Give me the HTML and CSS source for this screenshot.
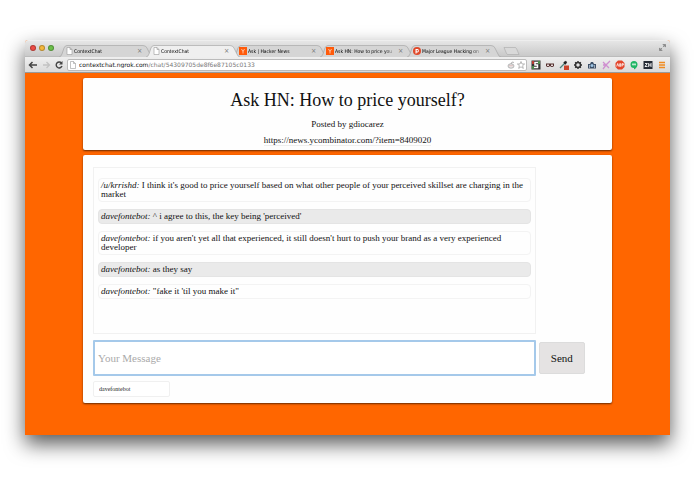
FILE: index.html
```html
<!DOCTYPE html>
<html lang="en">
  <head>
    <meta charset="utf-8" />
    <meta name="viewport" content="width=device-width, initial-scale=1" />
    <title>ContextChat</title>
    <link rel="stylesheet" href="styles.css">
  </head>
  <body>
    <div class="window">
      <div class="tab-strip">
        <div class="lights">
          <span class="light red"></span>
          <span class="light yellow"></span>
          <span class="light green"></span>
        </div>
        <div class="tabs">
          <div class="tab">
            <svg class="tab-shape" viewBox="0 0 94 12" preserveAspectRatio="none"><path d="M0 12Q2 12 3 9L5 3Q6 .5 8 .5H84Q87 .5 88 3L91 9Q92 12 94 12" /></svg>
            <svg class="favicon page" viewBox="0 0 8 8"><path d="M2 .5H5L7 2.500V7.500H2ZM5 .5V2.500H7" /></svg>
            <span class="tab-title">ContextChat</span>
            <span class="tab-close">×</span>
          </div>
          <div class="tab active">
            <svg class="tab-shape" viewBox="0 0 94 12" preserveAspectRatio="none"><path d="M0 12Q2 12 3 9L5 3Q6 .5 8 .5H84Q87 .5 88 3L91 9Q92 12 94 12" /></svg>
            <svg class="favicon page" viewBox="0 0 8 8"><path d="M2 .5H5L7 2.500V7.500H2ZM5 .5V2.500H7" /></svg>
            <span class="tab-title">ContextChat</span>
            <span class="tab-close">×</span>
          </div>
          <div class="tab">
            <svg class="tab-shape" viewBox="0 0 94 12" preserveAspectRatio="none"><path d="M0 12Q2 12 3 9L5 3Q6 .5 8 .5H84Q87 .5 88 3L91 9Q92 12 94 12" /></svg>
            <svg class="favicon" viewBox="0 0 8 8"><path fill="#ff5a0a" d="M0 0H8V8H0Z" /><path fill="none" stroke="#ffd9c2" stroke-width=".8" d="M2.500 2L4 4.500L5.500 2M4 4.500V6.500" /></svg>
            <span class="tab-title">Ask | Hacker News</span>
            <span class="tab-close">×</span>
          </div>
          <div class="tab">
            <svg class="tab-shape" viewBox="0 0 94 12" preserveAspectRatio="none"><path d="M0 12Q2 12 3 9L5 3Q6 .5 8 .5H84Q87 .5 88 3L91 9Q92 12 94 12" /></svg>
            <svg class="favicon" viewBox="0 0 8 8"><path fill="#ff5a0a" d="M0 0H8V8H0Z" /><path fill="none" stroke="#ffd9c2" stroke-width=".8" d="M2.500 2L4 4.500L5.500 2M4 4.500V6.500" /></svg>
            <span class="tab-title">Ask HN: How to price you</span>
            <span class="tab-close">×</span>
          </div>
          <div class="tab">
            <svg class="tab-shape" viewBox="0 0 94 12" preserveAspectRatio="none"><path d="M0 12Q2 12 3 9L5 3Q6 .5 8 .5H84Q87 .5 88 3L91 9Q92 12 94 12" /></svg>
            <svg class="favicon" viewBox="0 0 8 8"><circle cx="4" cy="4" r="4" fill="#e0492a" /><path fill="#fff" d="M2.500 2H4.500A1.800 1.800 0 0 1 4.500 5.500H3.500V6.500H2.500Z" /><circle cx="4.300" cy="3.700" r=".8" fill="#e0492a" /></svg>
            <span class="tab-title">Major League Hacking on</span>
            <span class="tab-close">×</span>
          </div>
          <svg class="new-tab" viewBox="0 0 17 8"><path d="M1 .5H12Q13 .5 13.500 1.500L16 7.500H5Q4 7.500 3.500 6.500Z" /></svg>
        </div>
        <svg class="expand" viewBox="0 0 8 8"><path d="M4.500 .5H7.500V3.500ZM.5 4.500V7.500H3.500Z" /><path d="M4.500 3.500L6.500 1.500M3.500 4.500L1.500 6.500" /></svg>
      </div>

      <div class="toolbar">
        <button class="tool" aria-label="Back"><svg viewBox="0 0 10 10"><path fill="none" stroke="#444" stroke-width="1.500" d="M9 5H2M4.500 2L1.500 5L4.500 8" /></svg></button>
        <button class="tool" aria-label="Forward"><svg viewBox="0 0 10 10"><path fill="none" stroke="#c2c2c2" stroke-width="1.300" d="M2 5H8M5.500 2L8.500 5L5.500 8" /></svg></button>
        <button class="tool" aria-label="Reload"><svg viewBox="0 0 10 10"><path fill="none" stroke="#444" stroke-width="1.400" d="M7.500 3A3 3 0 1 0 8 6" /><path fill="#444" d="M8.500 1V4.500H5Z" /></svg></button>
        <div class="omnibox">
          <svg class="page" viewBox="0 0 8 8"><path d="M1.500 .5H4.500L6.500 2.500V7.500H1.500ZM4.500 .5V2.500H6.500" /></svg>
          <span class="url"><b>contextchat.ngrok.com</b>/chat/54309705de8f6e87105c0133</span>
          <svg viewBox="0 0 8 8"><ellipse cx="4" cy="5" rx="3" ry="2.200" fill="#eee" stroke="#888" stroke-width=".6" /><path fill="none" stroke="#888" stroke-width=".6" d="M4 3L5 1L7 1.500" /><circle cx="3" cy="4.700" r=".5" fill="#b66" /><circle cx="5" cy="4.700" r=".5" fill="#b66" /></svg>
          <svg viewBox="0 0 8 8"><path fill="#fff" stroke="#999" stroke-width=".7" d="M4 .5L5 3H7.600L5.600 4.700L6.300 7.400L4 5.800L1.700 7.400L2.400 4.700L.4 3H3Z" /></svg>
        </div>
        <div class="extensions">
          <svg viewBox="0 0 10 10"><path fill="#333" d="M.5 .5H9.500V9.500H.5Z" /><path fill="#b83b33" d="M1 1H3V4H1Z" /><path fill="#4b8b4b" d="M7 1H9V4H7ZM1 6H3V9H1Z" /><path fill="none" stroke="#fff" stroke-width="1.500" d="M7 2.500H4V5H6.500V7.500H3" /></svg>
          <svg viewBox="0 0 10 10"><path fill="#54302f" d="M1 3.500H9V6Q7 8 5 6Q3 8 1 6Z" /><path fill="#e8dada" d="M2 4.500H4V6H2ZM6 4.500H8V6H6Z" /></svg>
          <svg viewBox="0 0 10 10"><path stroke="#4c837b" stroke-width="1.200" d="M1 8L6 3" /><path stroke="#222" stroke-width="2" d="M5 2L7 4M6 3L7.500 1.500" /><path fill="#cc432b" d="M5 5.500H10V10H5Z" /></svg>
          <svg viewBox="0 0 10 10"><circle cx="5" cy="5" r="2.500" fill="none" stroke="#333" stroke-width="1.500" /><path stroke="#333" stroke-width="1.400" d="M5 1V2.500M5 7.500V9M1 5H2.500M7.500 5H9M2.200 2.200L3.200 3.200M6.800 6.800L7.800 7.800M7.800 2.200L6.800 3.200M3.200 6.800L2.200 7.800" /></svg>
          <svg viewBox="0 0 10 10"><path fill="#3d5068" d="M1 4H3L4 2H6L7 4H9V8.500H1Z" /><circle cx="5" cy="5.500" r="1.500" fill="#9ec4e3" /><path stroke="#dfe8f0" stroke-width=".6" d="M2.500 5V8M7.500 5V8" /></svg>
          <svg viewBox="0 0 10 10"><path fill="none" stroke="#cf8fd0" stroke-width="1.300" d="M2 2L8 8M9 1L5 5L2 9M2 5H6" /></svg>
          <svg viewBox="0 0 10 10"><path fill="#e3452b" d="M3 .5H7L9.500 3V7L7 9.500H3L.5 7V3Z" /><path fill="none" stroke="#fff" stroke-width=".8" d="M1.700 6.500L2.700 3.500L3.700 6.500M4.700 6.500V3.700H5.700V6.300H4.700M7 6.500V3.700H8.300V5H7" /></svg>
          <svg viewBox="0 0 10 10"><path fill="#20b565" d="M5 1A3.500 3.500 0 0 1 8.500 4.500Q8.500 7.500 5 9.500V8A3.500 3.500 0 0 1 5 1Z" /><path fill="#fff" d="M3.300 3.500H4.700V5L3.800 6V5H3.300ZM5.300 3.500H6.700V5L5.800 6V5H5.300Z" /></svg>
          <svg viewBox="0 0 10 10"><path fill="#252b35" d="M.5 1H9.500V9H.5Z" /><path fill="none" stroke="#fff" stroke-width=".9" d="M2 3.500H4.300L2 6.500H4.500M5.700 3V7M8 3V7M5.700 5H8" /></svg>
          <svg viewBox="0 0 10 10"><path stroke="#f08b20" stroke-width="1.400" d="M2 2.500H8M2 5H8M2 7.500H8" /></svg>
        </div>
      </div>

      <main class="page-body">
        <header class="card header">
          <h1>Ask HN: How to price yourself?</h1>
          <p>Posted by gdiocarez</p>
          <p><a href="https://news.ycombinator.com/?item=8409020">https://news.ycombinator.com/?item=8409020</a></p>
        </header>

        <form class="card chat">
          <ul class="messages">
            <li><em>/u/krrishd:</em> I think it's good to price yourself based on what other people of your perceived skillset are charging in the market</li>
            <li><em>davefontebot:</em> ^ i agree to this, the key being 'perceived'</li>
            <li><em>davefontebot:</em> if you aren't yet all that experienced, it still doesn't hurt to push your brand as a very experienced developer</li>
            <li><em>davefontebot:</em> as they say</li>
            <li><em>davefontebot:</em> "fake it 'til you make it"</li>
          </ul>
          <div class="compose">
            <input type="text" class="message-input" aria-label="Your Message" placeholder="Your Message" />
            <button type="button" class="send">Send</button>
          </div>
          <input type="text" class="name-input" aria-label="Name" value="davefontebot" />
        </form>
      </main>
    </div>
  </body>
</html>
```
FILE: styles.css
```css
* {
  box-sizing: border-box;
}

body {
  margin: 0;
  padding: 40px 25px;
  background: #fff;
  color: #111;
  font-family: "Liberation Serif", serif;
  font-size: 9px;
}

.window {
  background: #f60;
  border-radius: 3px 3px 0 0;
  box-shadow: 0 9px 20px rgba(0, 0, 0, 0.65);
}

/* browser chrome */

.tab-strip {
  display: flex;
  align-items: flex-end;
  height: 17px;
  padding: 0 4px;
  border-top: 1px solid #eee;
  border-bottom: 1px solid #bbb;
  border-radius: 3px 3px 0 0;
  background: linear-gradient(#e6e6e6, #c9c9c9);
  font-family: "DejaVu Sans Condensed", "DejaVu Sans", sans-serif;
  font-size: 5px;
}

.lights {
  display: flex;
  gap: 3px;
  width: 30px;
  padding: 0 0 5px 1px;
}

.light {
  width: 6px;
  height: 6px;
  border: 1px solid rgba(0, 0, 0, 0.25);
  border-radius: 50%;
}

.red {
  background: #ee4c45;
}

.yellow {
  background: #f5b83d;
}

.green {
  background: #6cc04a;
}

.tabs {
  display: flex;
  flex: 1;
  align-items: center;
  min-width: 0;
}

.tab {
  position: relative;
  display: flex;
  align-items: center;
  gap: 1px;
  flex: 0 1 87px;
  min-width: 0;
  height: 10px;
  padding: 0 4px 0 6px;
}

.tab-shape {
  position: absolute;
  left: 0;
  bottom: -1px;
  width: 108%;
  height: 12px;
  fill: #d5d5d5;
  stroke: #a0a0a0;
  stroke-width: 0.6;
}

.active {
  z-index: 1;
}

.active .tab-shape {
  fill: #efefef;
}

.favicon {
  position: relative;
  flex: none;
  width: 8px;
  height: 8px;
}

.page path {
  fill: #fff;
  stroke: #999;
  stroke-width: 0.6;
}

.tab-title {
  position: relative;
  flex: 1;
  overflow: hidden;
  color: #000;
  white-space: nowrap;
  mask-image: linear-gradient(90deg, #000 80%, transparent);
}

.tab-close {
  position: relative;
  width: 5px;
  color: #777;
  font-size: 7px;
  line-height: 8px;
}

.new-tab {
  width: 17px;
  height: 8px;
  margin-left: 9px;
  fill: #d9d9d9;
  stroke: #aaa;
  stroke-width: 0.6;
}

.expand {
  width: 7px;
  height: 7px;
  margin-bottom: 5px;
  fill: #888;
  stroke: #888;
}

.toolbar {
  display: flex;
  align-items: center;
  height: 16px;
  padding: 0 3px;
  border-bottom: 1px solid #999;
  background: linear-gradient(#efefef, #dadada);
}

.tool {
  width: 13px;
  height: 10px;
  padding: 0;
  border: 0;
  background: none;
}

.tool svg {
  display: block;
  width: 10px;
  height: 10px;
}

.omnibox {
  display: flex;
  flex: 1;
  align-items: center;
  gap: 2px;
  min-width: 0;
  height: 12px;
  padding: 0 1px;
  border: 1px solid #bbb;
  border-radius: 2px;
  background: #fff;
}

.omnibox svg {
  flex: none;
  width: 8px;
  height: 8px;
}

.url {
  flex: 1;
  overflow: hidden;
  color: #777;
  font-family: "DejaVu Sans", sans-serif;
  font-size: 6px;
  white-space: nowrap;
}

.url b {
  color: #111;
  font-weight: normal;
}

.extensions {
  display: flex;
  gap: 4px;
  margin-left: 4px;
}

.extensions svg {
  width: 10px;
  height: 10px;
}

/* chat page */

.page-body {
  display: flex;
  flex-direction: column;
  align-items: center;
  gap: 5px;
  padding: 5px 0 32px;
}

.card {
  width: 82%;
  border-radius: 2px;
  background: #fefefe;
  box-shadow: 0 1px 2px rgba(0, 0, 0, 0.6);
}

.header {
  padding: 12px 10px 4px;
  text-align: center;
}

.header h1 {
  margin: 0 0 8px;
  font-size: 18px;
  font-weight: normal;
  line-height: 20px;
}

.header p {
  margin: 0;
  line-height: 12px;
}

.header p + p {
  margin-top: 4px;
}

.header a {
  border-bottom: 1px solid #eee;
  color: inherit;
  text-decoration: none;
}

.chat {
  padding: 12px 10px 6px;
}

.messages {
  display: flex;
  flex-direction: column;
  gap: 7px;
  width: 87%;
  min-height: 167px;
  margin: 0;
  padding: 10px 4px;
  border: 1px solid #f1f1f1;
  list-style: none;
}

.messages li {
  padding: 2px;
  border: 1px solid #f3f3f3;
  border-radius: 4px;
  line-height: 9px;
}

.messages li:nth-child(even) {
  border-color: #e4e4e4;
  background: #eaeaea;
}

.compose {
  display: flex;
  align-items: center;
  gap: 3px;
  margin: 6px 0 5px;
}

.message-input {
  width: 87%;
  height: 36px;
  padding: 0 3px;
  border: 2px solid #a5c9ea;
  border-radius: 1px;
  outline: 0;
  background: #fff;
  font: 11px "Liberation Serif", serif;
}

.message-input::placeholder {
  color: #aaa;
}

.send {
  width: 46px;
  height: 32px;
  padding: 0;
  border: 1px solid #dcdcdc;
  border-radius: 2px;
  background: #e5e3e3;
  color: #111;
  font: 11px "Liberation Serif", serif;
}

.name-input {
  display: block;
  width: 77px;
  height: 16px;
  padding: 0 5px;
  border: 1px solid #f0f0f0;
  border-radius: 2px;
  background: #fff;
  color: #222;
  font: 6px "Liberation Serif", serif;
}
```
